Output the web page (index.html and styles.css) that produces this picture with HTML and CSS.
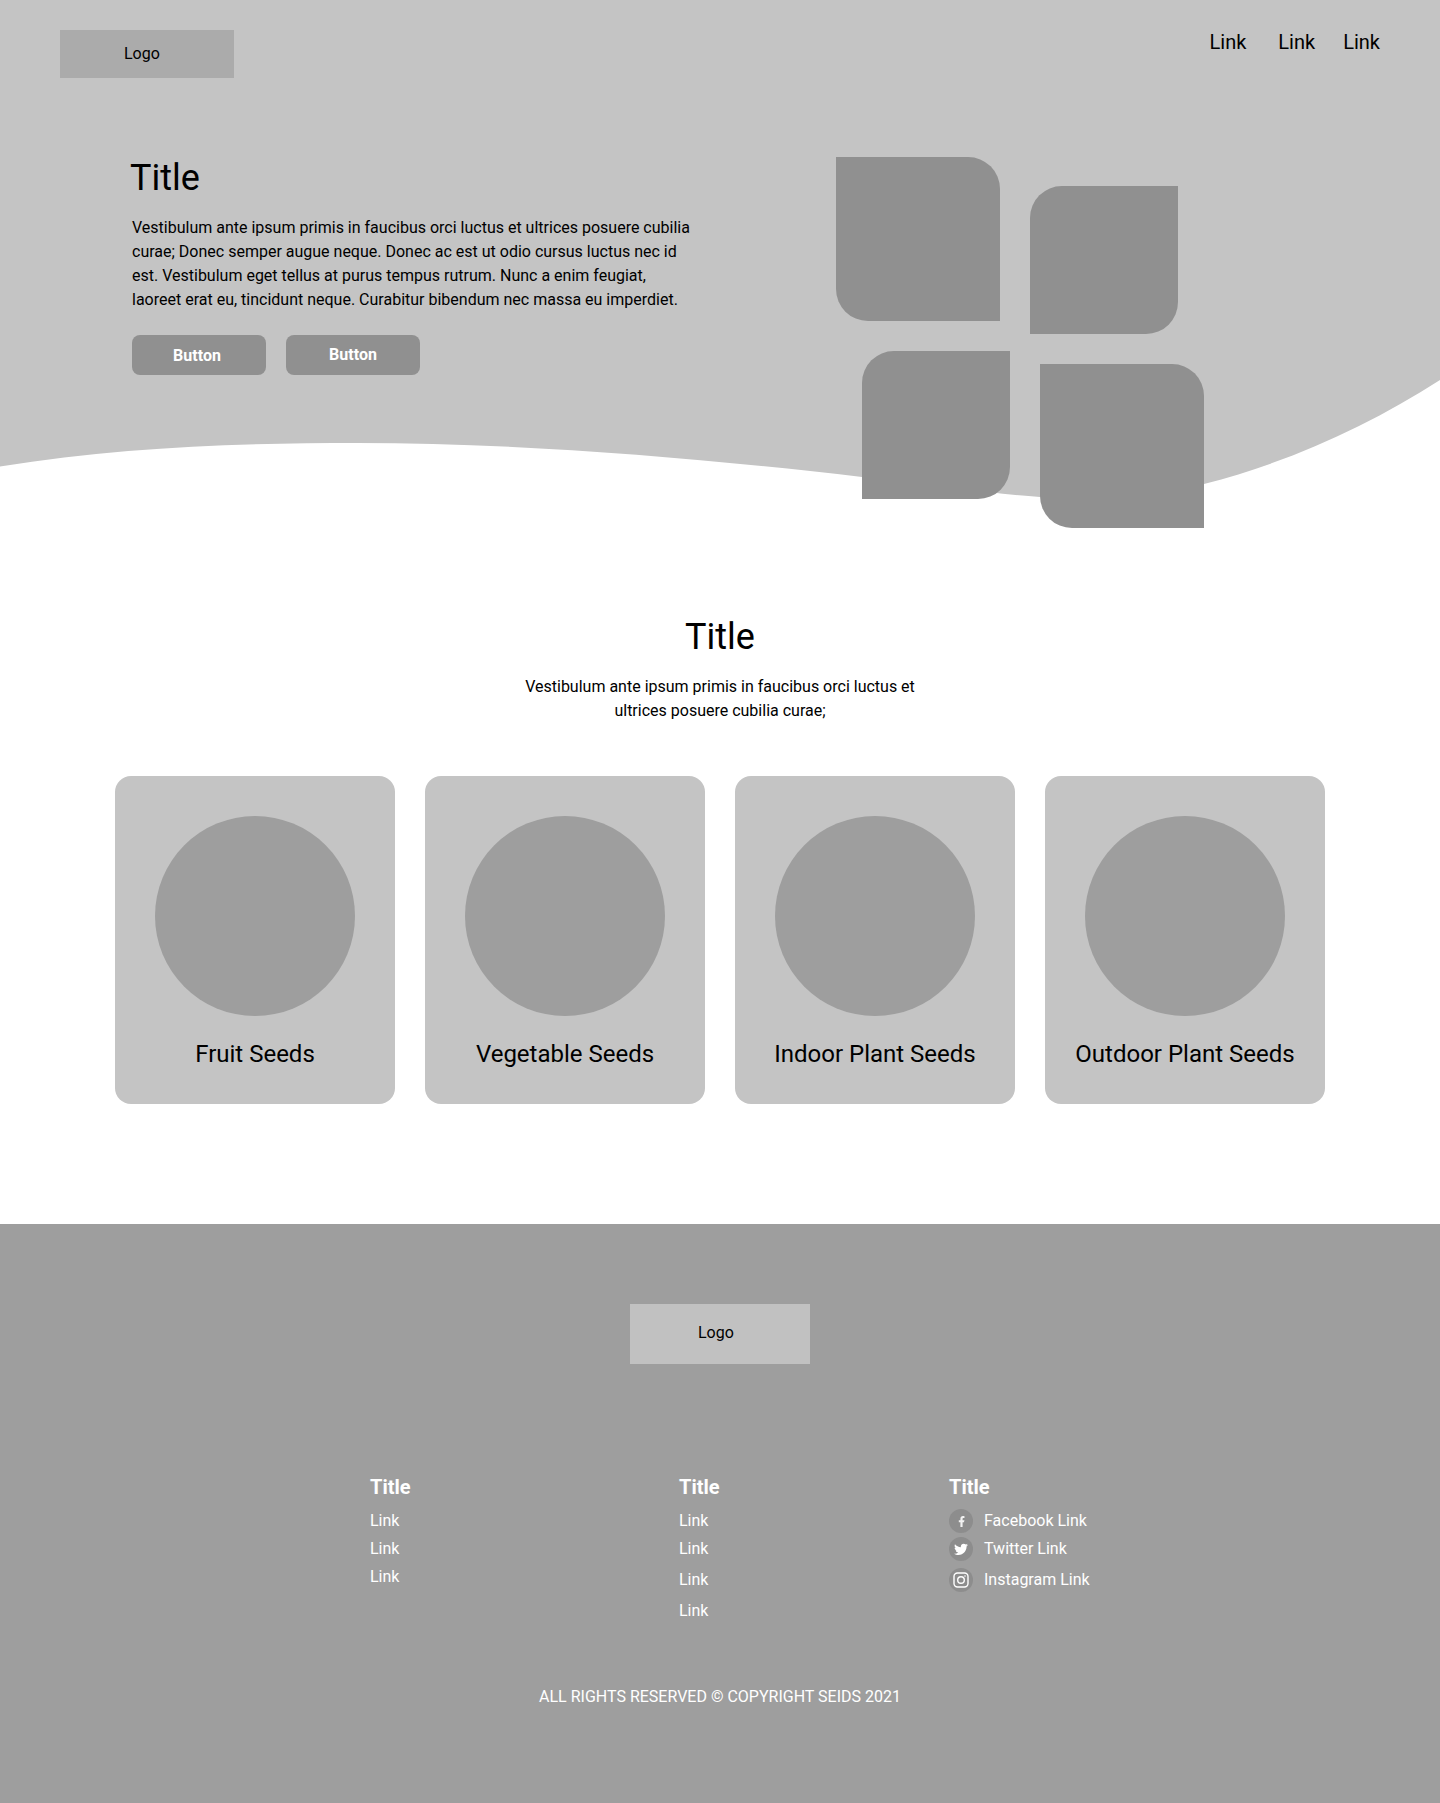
FILE: index.html
```html
<!DOCTYPE html>
<html lang="en">
<head>
<meta charset="utf-8">
<title>Seids</title>
<link rel="stylesheet" href="styles.css">
</head>
<body>
<div class="top">
  <svg class="wave" viewBox="0 0 1440 528" preserveAspectRatio="none" aria-hidden="true">
    <path d="M0 0H1440V380C1370 425 1290 462 1204 484C1150 498 1100 503 1040 497C1000 494 940 487 862 477C700 458 520 443 358 443C240 443 120 447 0 466.500Z"/>
  </svg>
  <header class="header">
    <div class="logo"><span>Logo</span></div>
    <nav class="nav">
      <a class="nav-link nav-link-a">Link</a>
      <a class="nav-link nav-link-b">Link</a>
      <a class="nav-link">Link</a>
    </nav>
  </header>
  <section class="hero">
    <div class="hero-copy">
      <h1 class="hero-title">Title</h1>
      <p class="hero-text">Vestibulum ante ipsum primis in faucibus orci luctus et ultrices posuere cubilia curae; Donec semper augue neque. Donec ac est ut odio cursus luctus nec id est. Vestibulum eget tellus at purus tempus rutrum. Nunc a enim feugiat, laoreet erat eu, tincidunt neque. Curabitur bibendum nec massa eu imperdiet.</p>
      <div class="buttons">
        <a class="button button-first">Button</a>
        <a class="button button-second">Button</a>
      </div>
    </div>
    <div class="shapes">
      <div class="shape-col">
        <div class="shape shape-lg leaf-a"></div>
        <div class="shape shape-sm leaf-b shape-in"></div>
      </div>
      <div class="shape-col shape-col-low">
        <div class="shape shape-sm leaf-b"></div>
        <div class="shape shape-lg leaf-a shape-in-sm"></div>
      </div>
    </div>
  </section>
</div>

<main class="seeds">
  <h2 class="seeds-title">Title</h2>
  <p class="seeds-text">Vestibulum ante ipsum primis in faucibus orci luctus et ultrices posuere cubilia curae;</p>
  <div class="cards">
    <article class="card"><div class="circle"></div><h3 class="card-name">Fruit Seeds</h3></article>
    <article class="card"><div class="circle"></div><h3 class="card-name">Vegetable Seeds</h3></article>
    <article class="card"><div class="circle"></div><h3 class="card-name">Indoor Plant Seeds</h3></article>
    <article class="card"><div class="circle"></div><h3 class="card-name">Outdoor Plant Seeds</h3></article>
  </div>
</main>

<footer class="footer">
  <div class="footer-logo"><span>Logo</span></div>
  <div class="footer-cols">
    <div class="col">
      <h4 class="col-title">Title</h4>
      <a class="col-link">Link</a>
      <a class="col-link">Link</a>
      <a class="col-link">Link</a>
    </div>
    <div class="col col-loose">
      <h4 class="col-title">Title</h4>
      <a class="col-link">Link</a>
      <a class="col-link">Link</a>
      <a class="col-link">Link</a>
      <a class="col-link">Link</a>
    </div>
    <div class="col col-loose">
      <h4 class="col-title">Title</h4>
      <a class="col-link social">
        <span class="badge"><svg class="icon-f" viewBox="0 0 24 24"><path d="M14 13.500h2.500l1-4H14v-2c0-1.030 0-2 2-2h1.500V2.140c-.326-.043-1.557-.14-2.857-.14C11.928 2 10 3.657 10 6.700v2.800H7v4h3V22h4v-8.500z"/></svg></span>
        Facebook Link
      </a>
      <a class="col-link social">
        <span class="badge"><svg class="icon-t" viewBox="0 0 24 24"><path d="M22.460 6c-.77.35-1.600.58-2.460.69.88-.53 1.560-1.370 1.880-2.380-.83.5-1.750.85-2.720 1.050C18.370 4.500 17.260 4 16 4c-2.350 0-4.270 1.920-4.270 4.290 0 .34.04.67.11.98C8.280 9.090 5.110 7.380 3 4.790c-.37.63-.58 1.370-.58 2.150 0 1.490.75 2.810 1.910 3.560-.71 0-1.370-.2-1.950-.5v.03c0 2.080 1.480 3.820 3.440 4.210a4.220 4.220 0 0 1-1.930.07 4.280 4.280 0 0 0 4 2.980 8.521 8.521 0 0 1-5.330 1.840c-.34 0-.68-.02-1.020-.06C3.440 20.290 5.700 21 8.120 21 16 21 20.330 14.460 20.330 8.790c0-.19 0-.37-.01-.56.84-.6 1.560-1.360 2.140-2.230z"/></svg></span>
        Twitter Link
      </a>
      <a class="col-link social">
        <span class="badge"><svg class="icon-i" viewBox="0 0 16 16"><rect x="1" y="1" width="14" height="14" rx="3.500"/><circle cx="8" cy="8" r="3.300"/><circle class="dot" cx="12" cy="4" r=".8"/></svg></span>
        Instagram Link
      </a>
    </div>
  </div>
  <p class="copyright">ALL RIGHTS RESERVED © COPYRIGHT SEIDS 2021</p>
</footer>
</body>
</html>
```

FILE: styles.css
```css
* { box-sizing: border-box; }
html, body { margin: 0; padding: 0; }
body {
  width: 1440px;
  background: #fff;
  color: #000;
  font-family: Roboto, "Liberation Sans", sans-serif;
  font-size: 16px;
  line-height: 24px;
}
h1, h2, h3, h4, p { margin: 0; font-weight: 400; }

.top { position: relative; height: 528px; }
.wave { position: absolute; left: 0; top: 0; width: 1440px; height: 528px; display: block; }
.wave path { fill: #c4c4c4; }

.header {
  position: relative;
  display: flex;
  justify-content: space-between;
  align-items: flex-start;
  padding: 30px 60px 0;
}
.logo {
  width: 174px;
  height: 48px;
  padding-left: 64px;
  background: #ababab;
  line-height: 48px;
}
.nav { display: flex; }
.nav-link { font-size: 20px; line-height: 24px; }
.nav-link-a { margin-right: 32px; }
.nav-link-b { margin-right: 28px; }

.hero {
  position: relative;
  display: flex;
  align-items: flex-start;
  padding: 79px 0 0 132px;
}
.hero-copy { width: 560px; margin-right: 144px; }
.hero-title { margin-left: -2px; font-size: 36px; line-height: 42px; margin-bottom: 17px; }
.hero-text { font-size: 16px; line-height: 24px; }
.buttons { display: flex; gap: 20px; margin-top: 23px; }
.button {
  width: 134px;
  height: 40px;
  border-radius: 8px;
  background: #909090;
  color: #fff;
  font-weight: 700;
  text-align: center;
}
.button-first { padding-right: 4px; line-height: 41px; }
.button-second { line-height: 39px; }

.shapes { display: flex; gap: 20px; }
.shape-col { display: flex; flex-direction: column; gap: 30px; width: 174px; }
.shape-col-low { margin-top: 29px; }
.shape { background: #909090; }
.shape-lg { width: 164px; height: 164px; }
.shape-sm { width: 148px; height: 148px; }
.shape-in { margin-left: 26px; }
.shape-in-sm { margin-left: 10px; }
.leaf-a { border-radius: 0 32px 0 32px; }
.leaf-b { border-radius: 32px 0 32px 0; }

.seeds { padding: 88px 115px 120px; text-align: center; }
.seeds-title { font-size: 36px; line-height: 42px; margin-bottom: 17px; }
.seeds-text { width: 420px; margin: 0 auto 53px; }
.cards { display: flex; gap: 30px; }
.card {
  width: 280px;
  height: 328px;
  padding-top: 40px;
  border-radius: 16px;
  background: #c4c4c4;
}
.circle { width: 200px; height: 200px; margin: 0 auto 24px; border-radius: 50%; background: #9e9e9e; }
.card-name { font-size: 24px; line-height: 28px; }

.footer { height: 579px; padding-top: 80px; background: #9e9e9e; color: #fff; }
.footer-logo {
  width: 180px;
  height: 60px;
  margin: 0 auto 111px;
  padding-left: 68px;
  background: #c1c1c1;
  color: #000;
  line-height: 58px;
}
.footer-cols { display: flex; padding-left: 370px; }
.col { display: flex; flex-direction: column; align-items: flex-start; width: 309px; }
.col + .col { width: 270px; }
.col-title { font-size: 20px; line-height: 24px; font-weight: 700; margin-bottom: 10px; }
.col-link { line-height: 24px; margin-bottom: 4px; }
.col-loose .col-link:nth-of-type(n+3) { margin-top: 3px; }
.social { display: flex; align-items: center; gap: 11px; }
.badge {
  width: 24px;
  height: 24px;
  border-radius: 50%;
  background: #8d8d8d;
  display: flex;
  align-items: center;
  justify-content: center;
}
.badge svg { display: block; }
.icon-f { width: 13px; height: 13px; fill: #f2f2f2; }
.icon-t { width: 16px; height: 16px; fill: #fff; }
.icon-i { width: 16px; height: 16px; fill: none; stroke: #fff; stroke-width: 1.400; }
.icon-i .dot { fill: #fff; stroke: none; }
.copyright { margin-top: 58px; text-align: center; }
```
